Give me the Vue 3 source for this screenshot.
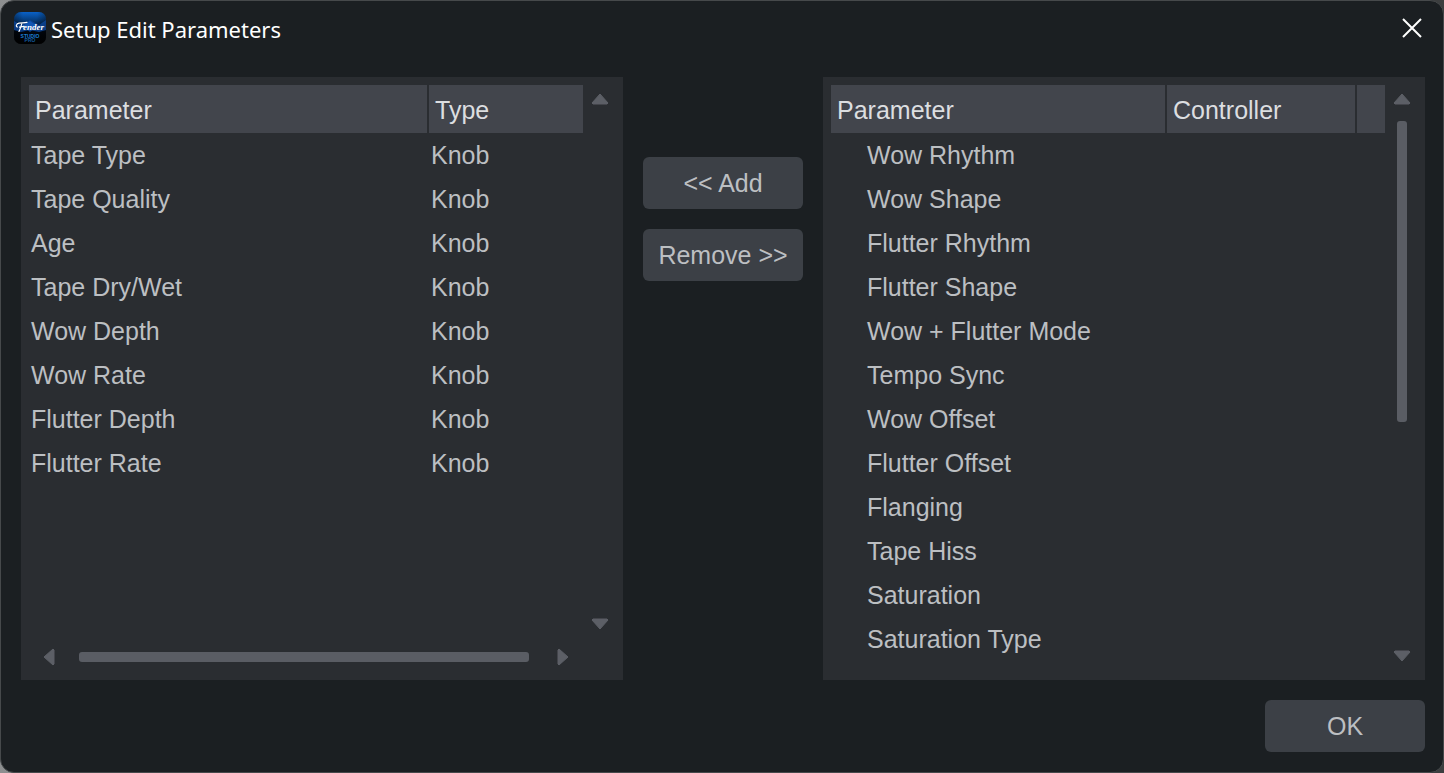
<template>
  <div class="dialog" role="dialog" aria-labelledby="dialog-title">
    <header class="titlebar">
      <svg class="logo" viewBox="0 0 32 32" aria-hidden="true">
        <defs>
          <linearGradient id="logo-sky" x1="0" y1="0" x2="0" y2="1">
            <stop offset="0" stop-color="#0a62c8" />
            <stop offset="0.3" stop-color="#05366f" />
            <stop offset="0.62" stop-color="#020a18" />
            <stop offset="1" stop-color="#000" />
          </linearGradient>
          <radialGradient id="logo-shade" cx="0.5" cy="0.1" r="0.75">
            <stop offset="0.3" stop-color="#000" stop-opacity="0" />
            <stop offset="1" stop-color="#000" stop-opacity="0.6" />
          </radialGradient>
          <clipPath id="logo-clip"><rect width="32" height="32" rx="7" /></clipPath>
        </defs>
        <g clip-path="url(#logo-clip)">
          <rect width="32" height="32" fill="url(#logo-sky)" />
          <rect width="32" height="32" fill="url(#logo-shade)" />
          <path d="M0 9 L7 13 L16 8 L25 13 L32 8 V18 L25 20 L16 18 L7 20 L0 18 Z" fill="#0d469a" opacity="0.8" />
          <path d="M9 14 L16 9 L23 14 L16 20 Z" fill="#1460c4" opacity="0.7" />
          <path
            d="M3.4 15 C1.5 14.4 2.2 11.8 5 11.2 C8 10.6 10 11.2 13 10.4 M8 11 C7 14 6.5 17 5 19.4 M5.5 15.2 L10 14.4"
            fill="none" stroke="#fff" stroke-width="1.2" stroke-linecap="round"
          />
          <text class="logo-script" x="9" y="18">ender</text>
          <text class="logo-studio" x="16" y="26">STUDIO</text>
          <text class="logo-pro" x="16" y="30">PRO</text>
        </g>
      </svg>
      <h1 id="dialog-title">Setup Edit Parameters</h1>
      <button class="close" type="button" aria-label="Close">
        <svg viewBox="0 0 20 20"><path d="M1 1 L19 19 M19 1 L1 19" /></svg>
      </button>
    </header>

    <main class="content">
      <section class="panel panel-assigned">
        <div class="list">
          <table>
            <colgroup>
              <col>
              <col class="col-type">
            </colgroup>
            <thead>
              <tr><th>Parameter</th><th>Type</th></tr>
            </thead>
            <tbody>
              <tr
                v-for="item in assigned"
                :key="item.name"
                :class="{ selected: item === selectedAssigned }"
                @click="selectedAssigned = item"
              >
                <td>{{ item.name }}</td>
                <td>{{ item.type }}</td>
              </tr>
            </tbody>
          </table>
        </div>
        <div class="scroll-v">
          <button type="button" aria-label="Scroll up">
            <svg viewBox="0 0 18 12" width="18" height="12"><path d="M9 1 L17 10 L16 11 H2 L1 10 Z" /></svg>
          </button>
          <div class="track"></div>
          <button type="button" aria-label="Scroll down">
            <svg viewBox="0 0 18 12" width="18" height="12"><path d="M9 11 L17 2 L16 1 H2 L1 2 Z" /></svg>
          </button>
        </div>
        <div class="scroll-h">
          <button type="button" aria-label="Scroll left">
            <svg viewBox="0 0 12 18" width="12" height="18"><path d="M1 9 L10 1 L11 2 V16 L10 17 Z" /></svg>
          </button>
          <div class="track"><div class="thumb"></div></div>
          <button type="button" aria-label="Scroll right">
            <svg viewBox="0 0 12 18" width="12" height="18"><path d="M11 9 L2 1 L1 2 V16 L2 17 Z" /></svg>
          </button>
        </div>
      </section>

      <div class="actions">
        <button class="btn" type="button" @click="add">&lt;&lt; Add</button>
        <button class="btn" type="button" @click="remove">Remove &gt;&gt;</button>
      </div>

      <section class="panel">
        <div class="list">
          <table class="tree">
            <colgroup>
              <col>
              <col class="col-controller">
              <col class="col-extra">
            </colgroup>
            <thead>
              <tr><th>Parameter</th><th>Controller</th><th></th></tr>
            </thead>
            <tbody>
              <tr
                v-for="item in available"
                :key="item.name"
                :class="{ selected: item === selectedAvailable }"
                @click="selectedAvailable = item"
              >
                <td>{{ item.name }}</td>
                <td></td>
                <td></td>
              </tr>
            </tbody>
          </table>
        </div>
        <div class="scroll-v">
          <button type="button" aria-label="Scroll up">
            <svg viewBox="0 0 18 12" width="18" height="12"><path d="M9 1 L17 10 L16 11 H2 L1 10 Z" /></svg>
          </button>
          <div class="track"><div class="thumb"></div></div>
          <button type="button" aria-label="Scroll down">
            <svg viewBox="0 0 18 12" width="18" height="12"><path d="M9 11 L17 2 L16 1 H2 L1 2 Z" /></svg>
          </button>
        </div>
      </section>
    </main>

    <footer class="footer">
      <button class="btn" type="button">OK</button>
    </footer>
  </div>
</template>

<script setup>
import { ref } from 'vue'

const toItem = (name) => ({ name, type: 'Knob' })

const assigned = ref([
  'Tape Type',
  'Tape Quality',
  'Age',
  'Tape Dry/Wet',
  'Wow Depth',
  'Wow Rate',
  'Flutter Depth',
  'Flutter Rate'
].map(toItem))

const available = ref([
  'Wow Rhythm',
  'Wow Shape',
  'Flutter Rhythm',
  'Flutter Shape',
  'Wow + Flutter Mode',
  'Tempo Sync',
  'Wow Offset',
  'Flutter Offset',
  'Flanging',
  'Tape Hiss',
  'Saturation',
  'Saturation Type'
].map(toItem))

const selectedAssigned = ref(null)
const selectedAvailable = ref(null)

function move(item, from, to) {
  if (!item.value) return
  from.value = from.value.filter((entry) => entry.name !== item.value.name)
  to.value.push(item.value)
  item.value = null
}

function add() {
  move(selectedAvailable, available, assigned)
}

function remove() {
  move(selectedAssigned, assigned, available)
}
</script>

<style>
body {
  margin: 0;
  background: linear-gradient(to right, #8d8f90 0, #6c6e6f 20%, #3c3e3f 50%, #3c3e3f 100%);
}
</style>

<style scoped>
.dialog {
  display: flex;
  flex-direction: column;
  box-sizing: border-box;
  min-height: 100vh;
  padding: 0 18px 20px 20px;
  border: 1px solid #46494b;
  border-radius: 14px;
  background: #1b1f22;
  color: #bcbfc2;
  font-family: "Liberation Sans", Arial, sans-serif;
  font-size: 25px;
}

button {
  padding: 0;
  border: 0;
  background: none;
  color: inherit;
  font: inherit;
}

.titlebar {
  display: flex;
  align-items: center;
  gap: 5px;
  height: 54px;
  margin: 0 -9px 22px -7px;
}

.logo {
  width: 32px;
  height: 32px;
}

.logo-script {
  fill: #fff;
  font: italic bold 9px "Liberation Serif", serif;
}

.logo-studio,
.logo-pro {
  fill: #1c7fd6;
  font: bold 5px "Liberation Sans", sans-serif;
  text-anchor: middle;
}

.logo-pro {
  fill: #135a9c;
}

h1 {
  flex: 1;
  margin: 0;
  padding-top: 2px;
  color: #fff;
  font: 400 22px/32px "Noto Sans", "Open Sans", sans-serif;
}

.close {
  display: flex;
  align-items: center;
  justify-content: center;
  width: 44px;
  height: 44px;
}

.close svg {
  width: 20px;
  height: 20px;
  fill: none;
  stroke: #fff;
  stroke-width: 2;
}

.content {
  display: flex;
  flex: 1;
}

.panel {
  display: grid;
  flex: 1;
  grid-template-columns: 1fr 34px;
  grid-template-rows: 1fr auto;
  min-width: 0;
  padding: 8px 6px 10px 8px;
  background: #2a2d31;
}

.panel-assigned {
  padding-bottom: 4px;
}

.list {
  overflow: hidden;
}

table {
  width: 100%;
  table-layout: fixed;
  border-spacing: 0;
}

.col-type {
  width: 154px;
}

.col-controller {
  width: 190px;
}

.col-extra {
  width: 28px;
}

th {
  box-sizing: border-box;
  height: 49px;
  padding: 2px 6px 0;
  border-right: 2px solid #2a2d31;
  border-bottom: 1px solid #2a2d31;
  background: #42454c;
  color: #dcdee0;
  font-weight: 400;
  text-align: left;
}

th:last-child {
  border-right: 0;
}

td {
  box-sizing: border-box;
  height: 44px;
  padding: 0 2px 2px;
  white-space: nowrap;
}

.tree td:first-child {
  padding-left: 36px;
}

.selected {
  background: #3c4047;
}

.scroll-v,
.scroll-h {
  display: flex;
}

.scroll-v {
  flex-direction: column;
}

.scroll-v button,
.scroll-h button {
  display: flex;
  align-items: center;
  justify-content: center;
}

.scroll-v button {
  height: 28px;
}

.scroll-h button {
  width: 40px;
  height: 38px;
}

.scroll-v path,
.scroll-h path {
  fill: #5c5f66;
  stroke: #5c5f66;
  stroke-width: 1;
  stroke-linejoin: round;
}

.track {
  flex: 1;
}

.thumb {
  border-radius: 3px;
  background: #5a5d64;
}

.scroll-v .track {
  padding: 8px 12px;
}

.scroll-v .thumb {
  height: 301px;
}

.scroll-h .track {
  padding: 14px 14px 14px 10px;
}

.scroll-h .thumb {
  height: 10px;
}

.actions {
  display: flex;
  flex-direction: column;
  gap: 20px;
  padding: 80px 20px 0;
}

.btn {
  width: 160px;
  height: 52px;
  border-radius: 6px;
  background: #3c4046;
}

.footer {
  display: flex;
  justify-content: flex-end;
  margin-top: 20px;
}
</style>
